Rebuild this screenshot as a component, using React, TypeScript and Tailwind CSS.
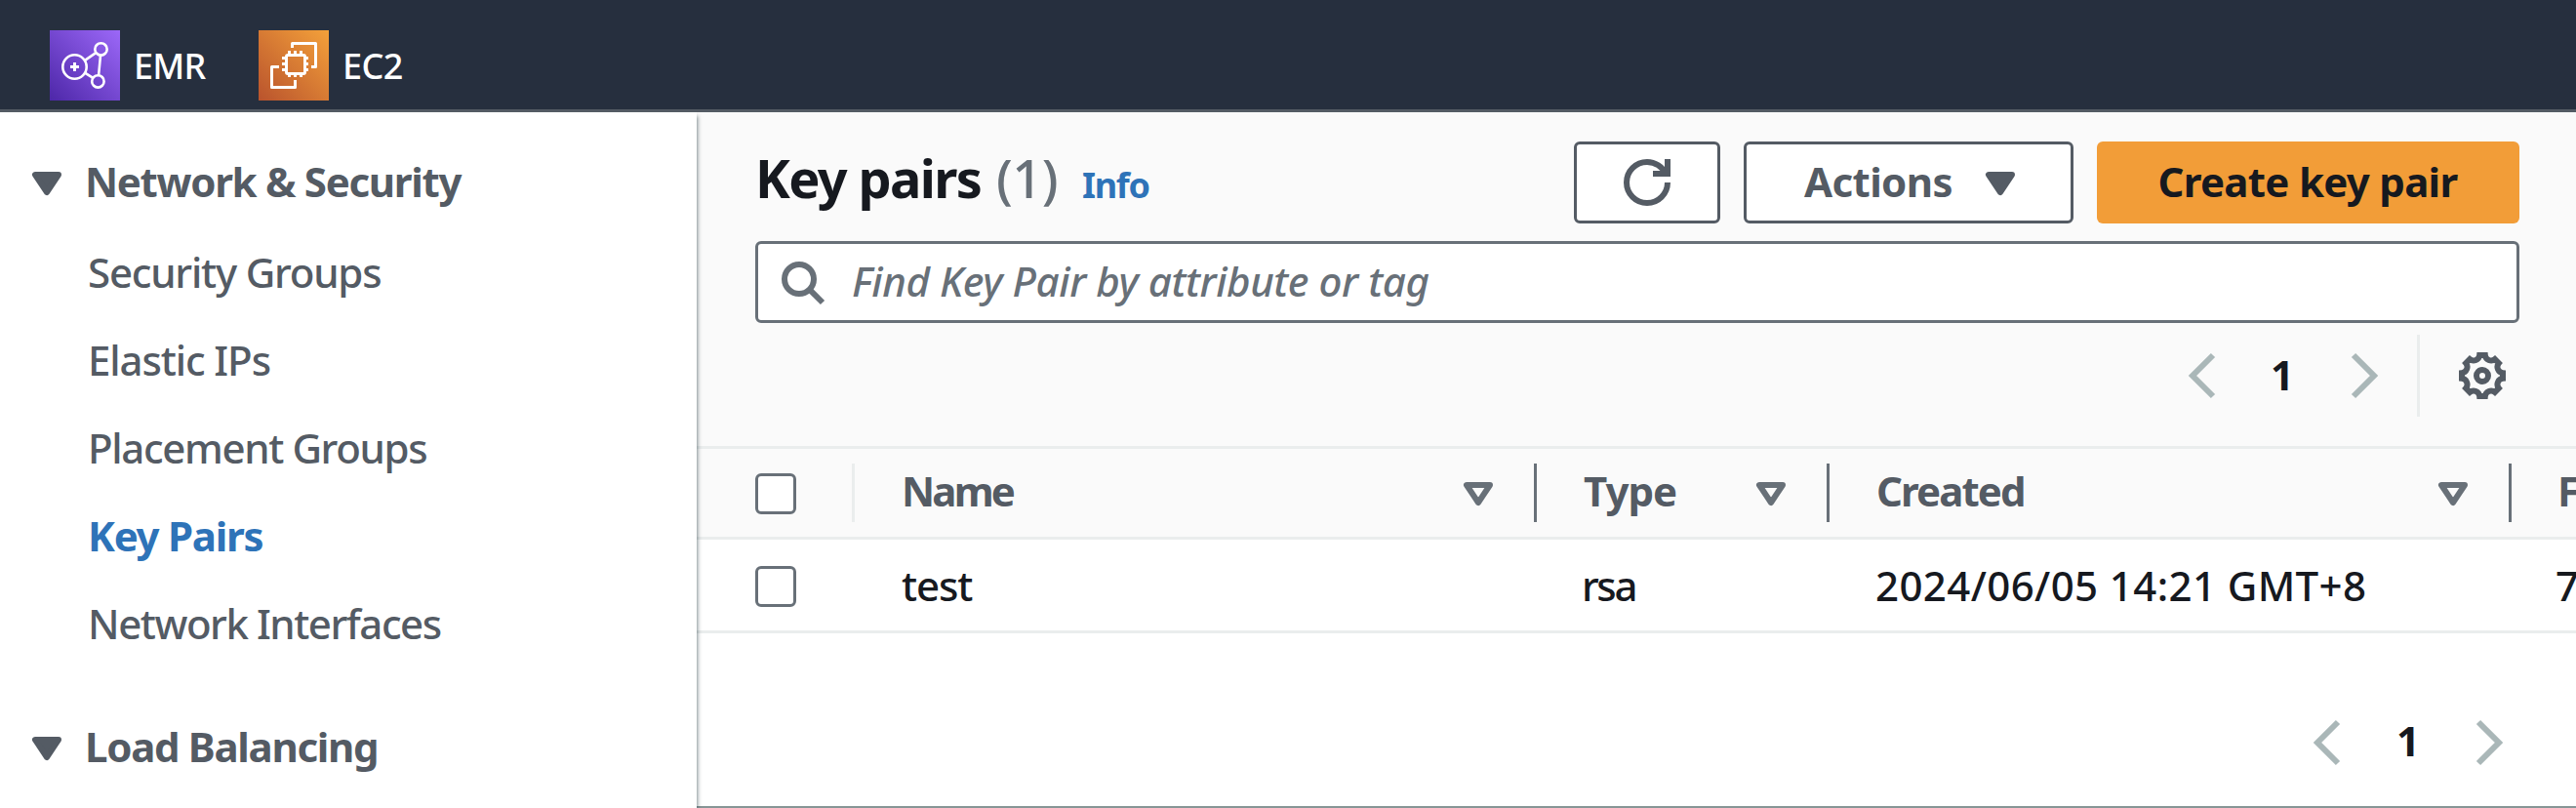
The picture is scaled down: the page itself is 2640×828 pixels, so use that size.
import type { ReactNode } from "react";

function Icon({ children, className = "" }: { children: ReactNode; className?: string }) {
  return (
    <svg
      viewBox="0 0 16 16"
      fill="none"
      stroke="currentColor"
      strokeWidth="2"
      className={`h-12 w-12 shrink-0 ${className}`}
    >
      {children}
    </svg>
  );
}

function CaretFilled({ className = "" }: { className?: string }) {
  return (
    <Icon className={className}>
      <path d="M4 5h8l-4 6-4-6z" fill="currentColor" strokeLinejoin="round" />
    </Icon>
  );
}

function CaretOutline() {
  return (
    <Icon className="text-[#687078]">
      <path d="M4 5h8l-4 6-4-6z" strokeLinejoin="round" />
    </Icon>
  );
}

function AngleLeft() {
  return (
    <Icon className="text-[#aab7b8]">
      <path d="M12 1 5 8l7 7" />
    </Icon>
  );
}

function AngleRight() {
  return (
    <Icon className="text-[#aab7b8]">
      <path d="m4 1 7 7-7 7" />
    </Icon>
  );
}

function EmrLogo() {
  return (
    <svg viewBox="0 0 72 72" className="h-[72px] w-[72px]" fill="none" stroke="#fff" strokeWidth="2.6">
      <defs>
        <linearGradient id="emr" x1="0" y1="1" x2="1" y2="0">
          <stop offset="0" stopColor="#4d27a8" />
          <stop offset="1" stopColor="#9c68f8" />
        </linearGradient>
      </defs>
      <rect width="72" height="72" fill="url(#emr)" stroke="none" />
      <circle cx="25.5" cy="37.5" r="12.2" />
      <circle cx="52.5" cy="19.4" r="6.2" />
      <circle cx="49.4" cy="52.4" r="6.2" />
      <path d="m36 30.8 11.2-7.6M36 43.6l8.3 5.3M52 25.8l-1.9 20.2" />
      <path d="M25.5 33v9M21 37.5h9" strokeWidth="3" />
    </svg>
  );
}

function Ec2Logo() {
  return (
    <svg viewBox="0 0 72 72" className="h-[72px] w-[72px]" fill="none" stroke="#fff" strokeWidth="3">
      <defs>
        <linearGradient id="ec2" x1="0" y1="1" x2="1" y2="0">
          <stop offset="0" stopColor="#b9532d" />
          <stop offset="1" stopColor="#f4a13a" />
        </linearGradient>
      </defs>
      <rect width="72" height="72" fill="url(#ec2)" stroke="none" />
      <rect x="28.5" y="25.5" width="19" height="19" rx="1.5" />
      <path d="M31.5 21v4M37.5 21v4M43.5 21v4M31.5 45v3M37.5 45v3M43.5 45v3M24 28.5h4M24 34.5h4M24 40.5h4M48 28.5h3M48 34.5h3M48 40.5h3" />
      <path d="M34.5 18v-4.5h24v24H54" strokeLinejoin="round" />
      <path d="M21 37.5h-7.5v21h24V51" strokeLinejoin="round" />
    </svg>
  );
}

function NavHeading({ children }: { children: ReactNode }) {
  return (
    <div className="flex h-[90px] items-center pl-6">
      <CaretFilled />
      <span className="ml-[15px] pb-1 font-bold tracking-[-1.3px]">{children}</span>
    </div>
  );
}

function Checkbox() {
  return <span className="mt-0.5 ml-[60px] block h-[42px] w-[42px] rounded-[6px] border-3 border-[#687078] bg-white" />;
}

function HeaderCell({ children, pad, last }: { children: ReactNode; pad: string; last?: boolean }) {
  return (
    <div className={`flex h-full items-center font-bold text-[#545b64] ${pad}`}>
      <span className="grow pb-1">{children}</span>
      {!last && (
        <div className="mt-0.5 flex items-center">
          <CaretOutline />
          <span className="-mt-0.5 ml-[33px] h-[60px] w-[3px] bg-[#687078]" />
        </div>
      )}
    </div>
  );
}

const columns = "grid-cols-[162px_699px_300px_699px_200px]";

const links = [
  { label: "Security Groups", style: "tracking-[-1.2px]" },
  { label: "Elastic IPs", style: "tracking-[-1.1px]" },
  { label: "Placement Groups", style: "tracking-[-1.35px]" },
  { label: "Key Pairs", style: "font-bold text-[#2e73b8] tracking-[-1.25px]" },
  { label: "Network Interfaces", style: "tracking-[-1.45px]" },
];

export default function App() {
  return (
    <div className="flex h-[828px] w-[2640px] flex-col overflow-hidden bg-white font-['Noto_Sans',sans-serif] text-[42px] leading-none font-medium whitespace-nowrap text-[#16191f]">
      <header className="relative z-20 flex h-[115px] shrink-0 items-start border-b-3 border-[#545b64] bg-[#262f3e] pt-[31px] pl-[51px] text-[36px] text-white">
        <div className="flex h-[72px] w-[214px] items-center">
          <EmrLogo />
          <span className="ml-3.5 pt-0.5 tracking-[-0.8px]">EMR</span>
        </div>
        <div className="flex h-[72px] items-center">
          <Ec2Logo />
          <span className="ml-3.5 pt-0.5 tracking-[-0.6px]">EC2</span>
        </div>
      </header>

      <div className="flex min-h-0 grow">
        <aside className="relative z-10 w-[714px] shrink-0 bg-white pt-7 text-[#545b64] shadow-[3px_2px_4px_-2px_rgba(0,28,36,0.5)]">
          <NavHeading>Network &amp; Security</NavHeading>
          <nav className="mt-px mb-[38px] pl-[90px]">
            {links.map((l) => (
              <div key={l.label} className="flex h-[90px] items-center">
                <span className={l.style}>{l.label}</span>
              </div>
            ))}
          </nav>
          <NavHeading>Load Balancing</NavHeading>
        </aside>

        <main className="flex min-w-0 grow flex-col overflow-hidden border-b-2 border-[#879596]">
          <section className="h-[342px] shrink-0 bg-[#fafafa] pt-[30px] pr-[58px] pl-[60px]">
            <div className="flex h-[84px] items-center justify-between">
              <div className="flex items-baseline pb-2.5">
                <h1 className="w-[247px] text-[54px] font-bold tracking-[-1.6px]">Key pairs</h1>
                <span className="w-[88px] text-[54px] text-[#687078] tracking-[-0.5px]">(1)</span>
                <span className="text-[36px] font-bold tracking-[-1.3px] text-[#2e73b8]">Info</span>
              </div>
              <div className="flex gap-6 font-bold text-[#545b64]">
                <button className="flex h-[84px] w-[150px] items-center justify-center rounded-[6px] border-3 border-[#545b64] bg-white">
                  <Icon>
                    <path d="M15 8c0 3.87-3.13 7-7 7s-7-3.13-7-7 3.13-7 7-7c2.79 0 5.2 1.63 6.33 4" />
                    <path d="M10 5h5V0" />
                  </Icon>
                </button>
                <button className="flex h-[84px] w-[338px] items-center rounded-[6px] border-3 border-[#545b64] bg-white pl-[59px]">
                  <span className="w-[177px] pb-0.5 text-left tracking-[-0.6px]">Actions</span>
                  <CaretFilled className="mt-0.5" />
                </button>
                <button className="flex h-[84px] w-[433px] items-center justify-center rounded-[6px] bg-[#f29d38] pb-0.5 pr-px tracking-[-0.7px] text-[#16191f]">
                  Create key pair
                </button>
              </div>
            </div>

            <div className="mt-[18px] flex h-[84px] items-center rounded-[6px] border-3 border-[#687078] bg-white pl-[21px] text-[#687078]">
              <Icon>
                <circle cx="7" cy="7" r="5" />
                <path d="m10.7 10.7 4.3 4.3" />
              </Icon>
              <span className="ml-[27px] pb-0.5 italic tracking-[-0.42px]">Find Key Pair by attribute or tag</span>
            </div>

            <div className="mt-3 flex h-[84px] items-center justify-end pr-3.5">
              <AngleLeft />
              <span className="w-[120px] pr-0.5 pb-0.5 text-center font-bold">1</span>
              <AngleRight />
              <span className="ml-[29px] h-full w-[3px] bg-[#eaeded]" />
              <Icon className="ml-10 text-[#545b64]">
                <circle cx="8" cy="8" r="2" />
                <path d="M7.05 1H8.95A2.05 2.05 0 0 0 12.28 2.38L13.62 3.72A2.05 2.05 0 0 0 15 7.05V8.95A2.05 2.05 0 0 0 13.62 12.28L12.28 13.62A2.05 2.05 0 0 0 8.95 15H7.05A2.05 2.05 0 0 0 3.72 13.62L2.38 12.28A2.05 2.05 0 0 0 1 8.95V7.05A2.05 2.05 0 0 0 2.38 3.72L3.72 2.38A2.05 2.05 0 0 0 7.05 1Z" />
              </Icon>
            </div>
          </section>

          <div className={`grid h-24 shrink-0 items-center border-y-3 border-[#eaeded] bg-[#fafafa] ${columns}`}>
            <div className="flex items-center justify-between">
              <Checkbox />
              <span className="h-[60px] w-[3px] bg-[#eaeded]" />
            </div>
            <HeaderCell pad="pl-12 tracking-[-2.8px]">Name</HeaderCell>
            <HeaderCell pad="pl-12 tracking-[-1px]">Type</HeaderCell>
            <HeaderCell pad="pl-12 tracking-[-1.9px]">Created</HeaderCell>
            <HeaderCell pad="pl-[47px]" last>F</HeaderCell>
          </div>

          <div className={`grid h-24 shrink-0 items-center border-b-3 border-[#eaeded] bg-white ${columns}`}>
            <Checkbox />
            <span className="pt-px pl-12 tracking-[-1.1px]">test</span>
            <span className="pt-px pl-[46px] tracking-[-2.4px]">rsa</span>
            <span className="pt-px pl-[47px] tracking-[0.4px]">2024/06/05 14:21 GMT+8</span>
            <span className="pt-px pl-[45px]">7</span>
          </div>

          <div className="flex grow items-center justify-end pt-[47px] pr-16">
            <AngleLeft />
            <span className="w-[120px] pb-1 text-center font-bold">1</span>
            <AngleRight />
          </div>
        </main>
      </div>
    </div>
  );
}
